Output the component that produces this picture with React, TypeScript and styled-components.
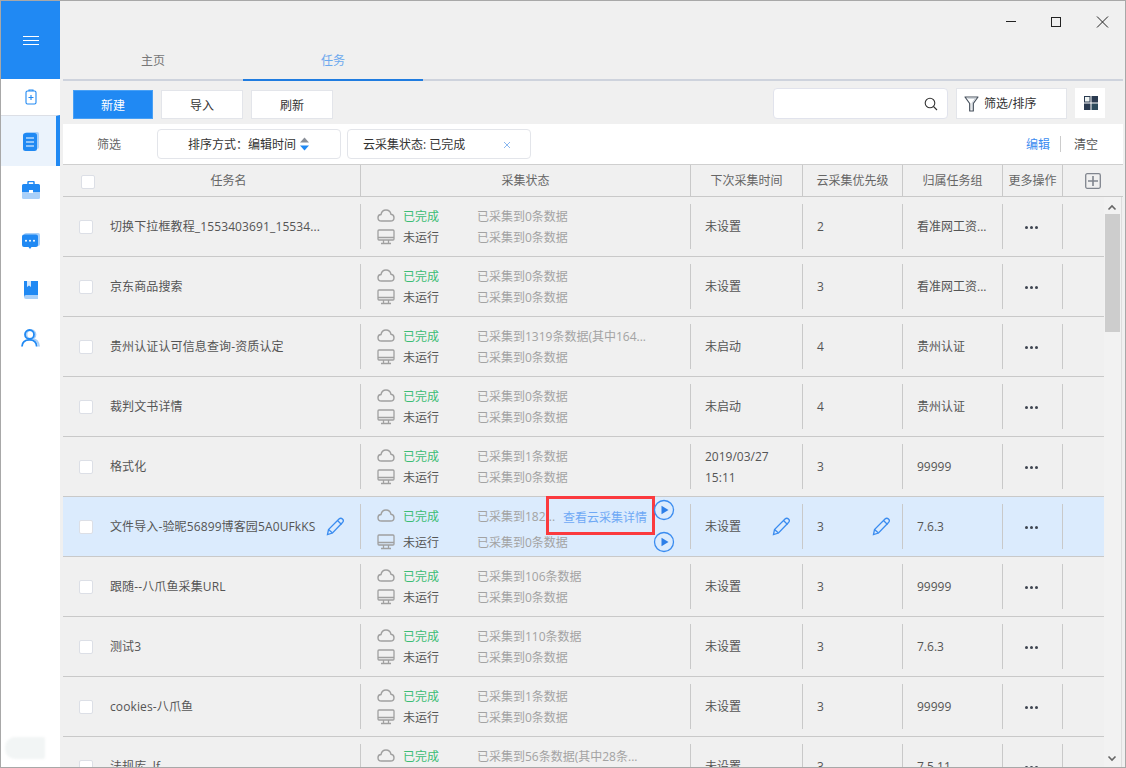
import React from "react";
import styled, { createGlobalStyle } from "styled-components";

const Global = createGlobalStyle`
  html, body { margin: 0; padding: 0; background: #f0f0f0; }
  * { box-sizing: border-box; }
`;

const FONT = `"Open Sans", "Noto Sans CJK SC", sans-serif`;
const BLUE = "#2089f3";

const Frame = styled.div`
  position: relative; width: 1126px; height: 768px; overflow: hidden;
  display: flex; background: #f0f0f0; font: 12px/1.2 ${FONT}; color: #555;
  border: 1px solid #a8a8a8;
`;
const Side = styled.aside`
  position: relative; width: 59px; height: 100%; background: #fff; flex: none;
  display: flex; flex-direction: column;
`;
const MenuBlock = styled.div`
  height: 78px; background: ${BLUE}; display: flex; align-items: center; justify-content: center;
`;
const MenuIcon = styled.div`
  width: 16px; height: 9px; border-top: 1px solid #fff; border-bottom: 1px solid #fff; position: relative;
  &::after { content: ""; position: absolute; left: 0; right: 0; top: 3px; height: 1px; background: #fff; }
`;
const SideItem = styled.div<{ $h: number; $active?: boolean; $shift?: number }>`
  height: ${p => p.$h}px; display: flex; align-items: center; justify-content: center; flex: none;
  background: ${p => (p.$active ? "#ebf3fc" : "#fff")};
  border-right: ${p => (p.$active ? `4px solid ${BLUE}` : "0 none")};
  border-top: ${p => (p.$active ? "1px solid #dcdfe6" : "0 none")};
  padding-left: ${p => (p.$active ? "4px" : "0")};
  padding-bottom: ${p => p.$shift ?? 0}px;
`;
const Smudge = styled.div`
  position: absolute; left: 4px; top: 736px; width: 40px; height: 22px; background: #f2f5f5;
  border-radius: 10px 2px 2px 10px; filter: blur(1px);
`;
const Main = styled.main`
  position: relative; flex: 1; min-width: 0; padding-left: 3px; padding-right: 2px;
  display: flex; flex-direction: column;
`;
const WinBar = styled.div`
  height: 43px; display: flex; justify-content: flex-end; align-items: flex-start;
`;
const WinBtn = styled.svg<{ $left: number }>`
  position: absolute; top: 14px; left: ${p => p.$left}px; width: 14px; height: 14px;
`;
const Tabs = styled.nav`
  height: 37px; display: flex; border-bottom: 2px solid #ced3dd; 
`;
const Tab = styled.div<{ $active?: boolean }>`
  width: 180px; height: 37px; display: flex; align-items: flex-start; padding-top: 10px; justify-content: center;
  font-size: 12px; color: ${p => (p.$active ? "#6ba8ee" : "#777")};
  border-bottom: 2px solid ${p => (p.$active ? "#1f7ce0" : "transparent")};
`;
const Toolbar = styled.div`
  height: 43px; display: flex; align-items: flex-start; padding: 7px 0 0 10px; position: relative;
`;
const ToolBtn = styled.button<{ $primary?: boolean; $w: number; $ml?: number }>`
  width: ${p => p.$w}px; height: 29px; margin-top: 2px; margin-left: ${p => p.$ml ?? 8}px; padding: 0;
  font: 12px ${FONT}; color: ${p => (p.$primary ? "#fff" : "#333")};
  background: ${p => (p.$primary ? BLUE : "#fff")};
  border: 1px solid ${p => (p.$primary ? "#48a0f5" : "#e3e5ea")};
`;
const Search = styled.div`
  position: absolute; left: 710px; top: 7px; width: 175px; height: 31px; background: #fff;
  border: 1px solid #e1e3ec; border-radius: 4px; display: flex; align-items: center; justify-content: flex-end; padding-right: 9px;
`;
const FilterBtn = styled.div`
  position: absolute; left: 893px; top: 7px; width: 111px; height: 31px; background: #fff; border: 1px solid #e3e5ea;
  display: flex; align-items: center; gap: 5px; padding-left: 7px; color: #333;
`;
const BtnLabel = styled.span`
  position: relative; top: 1px;
`;
const GridBtn = styled.div`
  position: absolute; left: 1012px; top: 7px; width: 30px; height: 30px; background: #fff;
  display: flex; align-items: center; justify-content: center; padding-left: 2px;
`;
const FilterRow = styled.div`
  height: 41px; background: #fff; border-bottom: 1px solid #cfcfcf; position: relative;
  display: flex; align-items: center; color: #333; padding-top: 2px;
`;
const FilterLabel = styled.span`
  position: absolute; left: 34px; color: #666;
`;
const Chip = styled.div<{ $left: number; $w: number }>`
  position: absolute; left: ${p => p.$left}px; width: ${p => p.$w}px; top: 5px; height: 30px;
  background: #fff; border: 1px solid #e3e5ea; border-radius: 4px;
  display: flex; align-items: center; gap: 3px; color: #333;
`;
const ChipText = styled.span<{ $pl: number }>`
  padding-left: ${p => p.$pl}px; white-space: nowrap; position: relative; top: 1px;
`;
const ChipX = styled.svg`
  position: absolute; right: 19px; top: 11px; width: 8px; height: 8px;
`;
const EditLink = styled.span`
  position: absolute; left: 963px; color: #3b8cf0;
`;
const VLine = styled.span`
  position: absolute; left: 997px; top: 12px; width: 1px; height: 16px; background: #ccc;
`;
const ClearLink = styled.span`
  position: absolute; left: 1011px; color: #555;
`;
const COLS = "298px 330px 112px 100px 100px 60px 1fr";
const Head = styled.div`
  height: 32px; display: grid; grid-template-columns: ${COLS}; border-bottom: 1px solid #c9c9c9;
`;
const HeadCell = styled.div<{ $last?: boolean; $pl?: number }>`
  display: flex; align-items: center; justify-content: center; position: relative;
  border-right: ${p => (p.$last ? "0 none" : "1px solid #c9c9c9")}; color: #666;
  padding-left: ${p => p.$pl ?? 0}px; padding-top: ${p => (p.$last ? 0 : 2)}px;
`;
const Check = styled.span<{ $left: number; $top: number }>`
  position: absolute; left: ${p => p.$left}px; top: ${p => p.$top}px; width: 14px; height: 14px; background: #fff;
  border: 1px solid #dcdfe6; border-radius: 2px;
`;
const Body = styled.div`
  position: relative; flex: 1; min-height: 0; overflow: hidden;
`;
const RowList = styled.div`
  width: 1041px;
`;
const Row = styled.div<{ $hl?: boolean }>`
  height: 60px; display: grid; grid-template-columns: ${COLS}; position: relative;
  background: ${p => (p.$hl ? "#dbebfd" : "transparent")}; border-bottom: 1px solid #c9c9c9;
`;
const Cell = styled.div<{ $pl?: number; $noLine?: boolean }>`
  position: relative; display: flex; align-items: center; padding-left: ${p => p.$pl ?? 14}px; padding-top: 2px; color: #555; min-width: 0;
  &::after {
    content: ""; position: absolute; right: 0; top: 7px; height: 45px; width: 1px;
    background: ${p => (p.$noLine ? "transparent" : "#c9c9c9")};
  }
`;
const NameText = styled.span`
  white-space: nowrap; color: #555; letter-spacing: 0.12px;
`;
const StatusGrid = styled.div<{ $gap: number }>`
  position: absolute; left: 16px; top: 9px; display: grid; grid-template-columns: 26px 74px auto;
  grid-auto-rows: 21px; row-gap: ${p => p.$gap}px; align-items: center;
`;
const Done = styled.span`
  color: #3dbd75; position: relative; top: 1px;
`;
const Idle = styled.span`
  color: #555; position: relative; top: 1px;
`;
const Gray = styled.span`
  color: #a3a3a3; white-space: nowrap; position: relative; top: 1px;
`;
const TwoLine = styled.div`
  line-height: 21px; color: #555; margin-top: -2px;
`;
const Dots = styled.div`
  display: flex; gap: 2px; margin-left: 22px;
`;
const Dot = styled.i`
  width: 3px; height: 3px; border-radius: 50%; background: #3d4450; display: block;
`;
const Pencil = styled.svg<{ $right: number }>`
  position: absolute; right: ${p => p.$right}px; top: 20px; width: 19px; height: 19px;
`;
const RedBox = styled.div`
  position: absolute; left: 185px; top: -1px; width: 109px; height: 39px; border: 3px solid #fb3a3e;
  padding: 11px 0 0 14px; color: #6fa9f5; white-space: nowrap; line-height: 16px;
`;
const PlayWrap = styled.svg<{ $top: number }>`
  position: absolute; left: 292px; top: ${p => p.$top}px; width: 22px; height: 22px;
`;
const ScrollTrack = styled.div`
  position: absolute; left: 1041px; top: 0; bottom: 0; width: 18px; background: #f2f2f2; border-right: 1px solid #ddd;
`;
const ScrollThumb = styled.div`
  position: absolute; left: 1px; top: 17px; width: 15px; height: 118px; background: #cdcdcd;
`;
const Arrow = styled.svg<{ $top?: number; $bottom?: number }>`
  position: absolute; left: 3px; width: 10px; height: 7px;
  ${p => (p.$top !== undefined ? `top:${p.$top}px;` : `bottom:${p.$bottom}px;`)}
`;
const StatusIcon = styled.svg`
  position: relative; top: -1px;
`;

const Cloud = () => (
  <StatusIcon width="18" height="13" viewBox="0 0 18 13" fill="none" stroke="#a0a0a0" strokeWidth="1.4">
    <path d="M4.5 12C2.3 12 1 10.5 1 8.7 1 7 2.3 5.6 4 5.5 4.5 2.9 6.5 1 9 1c2.5 0 4.5 1.800 5 4.300 1.700.2 3 1.600 3 3.400C17 10.500 15.600 12 13.500 12z" />
  </StatusIcon>
);
const Monitor = () => (
  <StatusIcon width="18" height="16" viewBox="0 0 18 16" fill="none" stroke="#a0a0a0" strokeWidth="1.3">
    <rect x="1" y="1" width="16" height="10" rx="1" />
    <path d="M1 8.500h16M6.500 11v3.500M11.500 11v3.500M4 14.500h10" />
  </StatusIcon>
);
const PencilIcon = ({ right }: { right: number }) => (
  <Pencil $right={right} viewBox="0 0 19 19" fill="none" stroke="#3a8cf0" strokeWidth="1.3">
    <path d="M1.500 17.500l1-5L13 2c1-1 2.500-1 3.500 0s1 2.500 0 3.500L6.500 16z" />
    <path d="M11.500 3.500l4 4M2.500 12.500l4 3.500" />
  </Pencil>
);
const Play = ({ top }: { top: number }) => (
  <PlayWrap $top={top} viewBox="0 0 22 22">
    <circle cx="11" cy="11" r="9.500" fill="none" stroke="#3a8cf0" strokeWidth="1.300" />
    <path d="M8.500 6.800l7 4.200-7 4.200z" fill="#2d7fe8" />
  </PlayWrap>
);

const rows = [
  { name: "切换下拉框教程_1553403691_15534...", cloud: "已采集到0条数据", local: "已采集到0条数据", next: "未设置", pri: "2", group: "看准网工资..." },
  { name: "京东商品搜索", cloud: "已采集到0条数据", local: "已采集到0条数据", next: "未设置", pri: "3", group: "看准网工资..." },
  { name: "贵州认证认可信息查询-资质认定", cloud: "已采集到1319条数据(其中164...", local: "已采集到0条数据", next: "未启动", pri: "4", group: "贵州认证" },
  { name: "裁判文书详情", cloud: "已采集到0条数据", local: "已采集到0条数据", next: "未启动", pri: "4", group: "贵州认证" },
  { name: "格式化", cloud: "已采集到1条数据", local: "已采集到0条数据", next: "2019/03/27|15:11", pri: "3", group: "99999" },
  { name: "文件导入-验昵56899博客园5A0UFkKS", cloud: "已采集到182...", local: "已采集到0条数据", next: "未设置", pri: "3", group: "7.6.3", hl: true },
  { name: "跟随--八爪鱼采集URL", cloud: "已采集到106条数据", local: "已采集到0条数据", next: "未设置", pri: "3", group: "99999" },
  { name: "测试3", cloud: "已采集到110条数据", local: "已采集到0条数据", next: "未设置", pri: "3", group: "7.6.3" },
  { name: "cookies-八爪鱼", cloud: "已采集到1条数据", local: "已采集到0条数据", next: "未设置", pri: "3", group: "99999" },
  { name: "法规库 .lf", cloud: "已采集到56条数据(其中28条...", local: "已采集到0条数据", next: "未设置", pri: "3", group: "7.5.11" },
];

export default function App() {
  return (
    <Frame>
      <Global />
      <Side>
        <MenuBlock><MenuIcon /></MenuBlock>
        <SideItem $h={36}>
          <svg width="12" height="16" viewBox="0 0 12 16" fill="none" stroke={BLUE} strokeWidth="1.100">
            <rect x="1" y="2" width="10" height="13" rx="1.500" />
            <path d="M4 2V1h4v1M6 6v5M3.500 8.500h5" />
          </svg>
        </SideItem>
        <SideItem $h={51} $active>
          <svg width="16" height="19" viewBox="0 0 16 19">
            <rect x="2" y="0" width="14" height="17" rx="2" fill="#a9d0f9" />
            <rect x="0" y="1" width="14" height="18" rx="2.500" fill={BLUE} />
            <path d="M3 6h8M3 10h8M3 14h8" stroke="#fff" strokeWidth="1.100" />
          </svg>
        </SideItem>
        <SideItem $h={50} $shift={2}>
          <svg width="18" height="18" viewBox="0 0 18 18">
            <path d="M6 3V1.500C6 1 6.500.5 7 .5h4c.500 0 1 .5 1 1V3" fill="none" stroke={BLUE} strokeWidth="1.500" />
            <path d="M0 11h18v5.500a1.500 1.500 0 0 1-1.500 1.500h-15A1.500 1.500 0 0 1 0 16.500z" fill="#a9d0f9" />
            <path d="M1.500 3h15A1.500 1.500 0 0 1 18 4.500V11H0V4.500A1.500 1.500 0 0 1 1.500 3z" fill={BLUE} />
            <rect x="7" y="9" width="4" height="3" fill="#fff" />
          </svg>
        </SideItem>
        <SideItem $h={50}>
          <svg width="18" height="17" viewBox="0 0 18 17">
            <rect x="2" y="0" width="16" height="13" rx="2" fill="#a9d0f9" />
            <path d="M2 1.500h12a2 2 0 0 1 2 2V12a2 2 0 0 1-2 2H9.500L8 16l-1.500-2H2a2 2 0 0 1-2-2V3.500a2 2 0 0 1 2-2z" fill={BLUE} />
            <circle cx="4" cy="7.800" r="1" fill="#fff" /><circle cx="8" cy="7.800" r="1" fill="#fff" /><circle cx="12" cy="7.800" r="1" fill="#fff" />
          </svg>
        </SideItem>
        <SideItem $h={49} $shift={2}>
          <svg width="14" height="18" viewBox="0 0 14 18">
            <path d="M0 13h14v5H2a2 2 0 0 1-2-2z" fill="#a9d0f9" />
            <path d="M0 0h14v14H2a2 2 0 0 0-2 2z" fill={BLUE} />
            <path d="M3 0h4v6L5 4.500 3 6z" fill="#d5e8fc" />
          </svg>
        </SideItem>
        <SideItem $h={48} $shift={2}>
          <svg width="19" height="18" viewBox="0 0 19 18" fill="none">
            <circle cx="10" cy="5.500" r="4.500" stroke="#a9d0f9" strokeWidth="1.800" />
            <path d="M12 10c3 .5 5.500 3.500 6 7.500" stroke="#a9d0f9" strokeWidth="2" />
            <circle cx="8.500" cy="5.500" r="4.500" stroke={BLUE} strokeWidth="1.800" />
            <path d="M1 17.500C1.200 13 4 10.800 8.500 10.800s7 2.200 7.200 6.700" stroke={BLUE} strokeWidth="1.800" />
          </svg>
        </SideItem>
        <Smudge />
      </Side>
      <Main>
        <WinBar>
          <WinBtn $left={944} viewBox="0 0 14 14"><path d="M2 6.500h10" stroke="#222" strokeWidth="1" /></WinBtn>
          <WinBtn $left={989} viewBox="0 0 14 14"><rect x="2.500" y="2.500" width="9" height="9" fill="none" stroke="#222" strokeWidth="1" /></WinBtn>
          <WinBtn $left={1036} viewBox="0 0 14 14"><path d="M1 1.500l11 11M12 1.500l-11 11" stroke="#222" strokeWidth="1" /></WinBtn>
        </WinBar>
        <Tabs>
          <Tab>主页</Tab>
          <Tab $active>任务</Tab>
        </Tabs>
        <Toolbar>
          <ToolBtn $primary $w={80} $ml={0}>新建</ToolBtn>
          <ToolBtn $w={82}>导入</ToolBtn>
          <ToolBtn $w={82}>刷新</ToolBtn>
          <Search>
            <svg width="14" height="14" viewBox="0 0 14 14" fill="none" stroke="#333" strokeWidth="1.100">
              <circle cx="6" cy="6" r="4.800" /><path d="M9.500 9.500l3.500 3.500" />
            </svg>
          </Search>
          <FilterBtn>
            <svg width="15" height="16" viewBox="0 0 15 16" fill="none" stroke="#46505c" strokeWidth="1.200" strokeLinejoin="round">
              <path d="M1 1h13L9.300 7.500V15H5.700V7.500z" />
              <path d="M3.500 2.300h8L8 7v6.500" stroke="#b8c0ca" strokeWidth="0.800" />
            </svg>
            <BtnLabel>筛选/排序</BtnLabel>
          </FilterBtn>
          <GridBtn>
            <svg width="14" height="14" viewBox="0 0 14 14">
              <rect x="0.500" y="0.500" width="5.500" height="5.500" fill="#eef3f2" stroke="#2a3a50" />
              <rect x="7.500" y="0" width="6.500" height="6.500" fill="#2a3a50" />
              <rect x="0" y="7.500" width="6.500" height="6.500" fill="#2a3a50" />
              <rect x="7.500" y="7.500" width="6.500" height="6.500" fill="#2c4a5c" />
            </svg>
          </GridBtn>
        </Toolbar>
        <FilterRow>
          <FilterLabel>筛选</FilterLabel>
          <Chip $left={94} $w={184}>
            <ChipText $pl={30}>排序方式：编辑时间</ChipText>
            <svg width="11" height="14" viewBox="0 0 11 14">
              <path d="M1 5.500l4.500-5L10 5.500z" fill="#8a8f98" />
              <path d="M1 8.500l4.500 5L10 8.500z" fill={BLUE} />
            </svg>
          </Chip>
          <Chip $left={284} $w={184}>
            <ChipText $pl={15}>云采集状态: 已完成</ChipText>
            <ChipX viewBox="0 0 8 8"><path d="M1 1l6 6M7 1L1 7" stroke="#8ab8f0" strokeWidth="1" /></ChipX>
          </Chip>
          <EditLink>编辑</EditLink>
          <VLine />
          <ClearLink>清空</ClearLink>
        </FilterRow>
        <Head>
          <HeadCell $pl={34}><Check $left={18} $top={10} />任务名</HeadCell>
          <HeadCell>采集状态</HeadCell>
          <HeadCell>下次采集时间</HeadCell>
          <HeadCell>云采集优先级</HeadCell>
          <HeadCell>归属任务组</HeadCell>
          <HeadCell>更多操作</HeadCell>
          <HeadCell $last>
            <svg width="16" height="16" viewBox="0 0 16 16" fill="none" stroke="#80858e" strokeWidth="1.300">
              <rect x="0.700" y="0.700" width="14.600" height="14.600" rx="1.500" />
              <path d="M8 3v10M3 8h10" strokeWidth="1.600" />
            </svg>
          </HeadCell>
        </Head>
        <Body>
          <RowList>
            {rows.map(r => {
              const [d1, d2] = r.next.split("|");
              return (
                <Row key={r.name} $hl={r.hl}>
                  <Cell $pl={47}>
                    <Check $left={16} $top={23} />
                    <NameText>{r.name}</NameText>
                    {r.hl && <PencilIcon right={16} />}
                  </Cell>
                  <Cell>
                    <StatusGrid $gap={r.hl ? 5 : 0}>
                      <Cloud /><Done>已完成</Done><Gray>{r.cloud}</Gray>
                      <Monitor /><Idle>未运行</Idle><Gray>{r.local}</Gray>
                    </StatusGrid>
                    {r.hl && (
                      <>
                        <RedBox>查看云采集详情</RedBox>
                        <Play top={2} />
                        <Play top={34} />
                      </>
                    )}
                  </Cell>
                  <Cell>
                    <TwoLine>{d1}{d2 && <><br />{d2}</>}</TwoLine>
                    {r.hl && <PencilIcon right={12} />}
                  </Cell>
                  <Cell>{r.pri}{r.hl && <PencilIcon right={12} />}</Cell>
                  <Cell>{r.group}</Cell>
                  <Cell $pl={0}><Dots><Dot /><Dot /><Dot /></Dots></Cell>
                  <Cell $noLine />
                </Row>
              );
            })}
          </RowList>
          <ScrollTrack>
            <Arrow $top={7} viewBox="0 0 10 7" fill="none" stroke="#666" strokeWidth="1.600"><path d="M1.500 5.500L5 2l3.500 3.500" /></Arrow>
            <ScrollThumb />
            <Arrow $bottom={5} viewBox="0 0 10 7" fill="none" stroke="#666" strokeWidth="1.600"><path d="M1.500 1.500L5 5l3.500-3.500" /></Arrow>
          </ScrollTrack>
        </Body>
      </Main>
    </Frame>
  );
}
